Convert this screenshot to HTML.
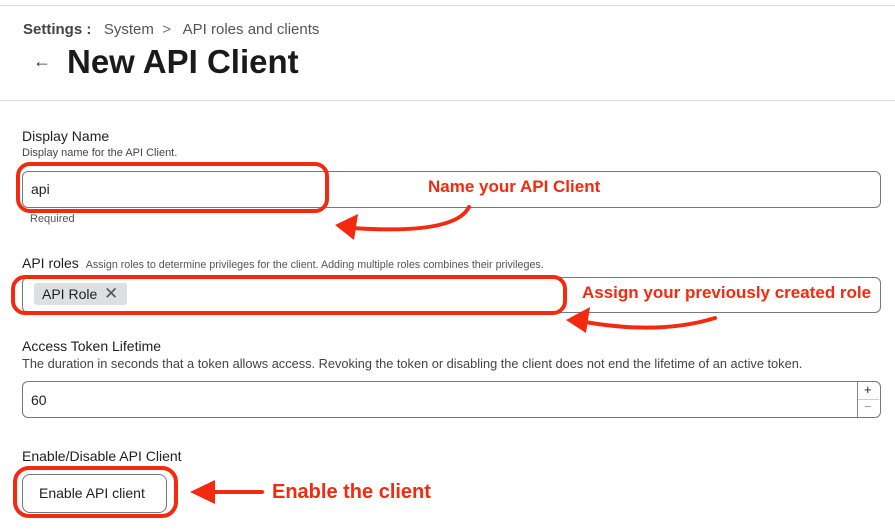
<!DOCTYPE html>
<html><head><style>
body{margin:0;width:895px;height:530px;overflow:hidden;background:#fff;font-family:"Liberation Sans",sans-serif;color:#1f1f1f;position:relative}
.a{position:absolute;white-space:nowrap}
.inp{position:absolute;border:1px solid #777;border-radius:6px;background:#fff}
.red{position:absolute;border:4px solid #f42a10;border-radius:14px}
.ann{position:absolute;color:#f42a10;font-weight:bold;white-space:nowrap}
</style></head><body>
<div class="a" style="left:0;top:5px;width:895px;height:1px;background:#ddd"></div>
<div class="a" style="left:23px;top:21px;font-size:15px;color:#333"><b style="color:#444">Settings :</b>&nbsp;&nbsp; <span style="color:#555">System</span> &nbsp;<span style="color:#777">&gt;</span>&nbsp;&nbsp; <span style="color:#555">API roles and clients</span></div>
<div class="a" style="left:33px;top:51px;font-size:18px;color:#333">←</div>
<div class="a" style="left:67px;top:43px;font-size:33px;font-weight:bold;color:#1a1a1a">New API Client</div>
<div class="a" style="left:0;top:100px;width:895px;height:1px;background:#ddd"></div>

<div class="a" style="left:22px;top:128px;font-size:14px">Display Name</div>
<div class="a" style="left:22px;top:147px;font-size:11px;color:#444">Display name for the API Client.</div>
<div class="inp" style="left:22px;top:171px;width:857px;height:35px"></div>
<div class="a" style="left:31px;top:181px;font-size:14px">api</div>
<div class="a" style="left:30px;top:213px;font-size:11px;color:#555">Required</div>
<div class="red" style="left:16px;top:162px;width:305px;height:43px"></div>
<div class="ann" style="left:428px;top:177px;font-size:17px">Name your API Client</div>

<div class="a" style="left:22px;top:255px;font-size:14px">API roles <span style="font-size:10.7px;color:#555;margin-left:3px">Assign roles to determine privileges for the client. Adding multiple roles combines their privileges.</span></div>
<div class="inp" style="left:22px;top:277px;width:857px;height:34px"></div>
<div class="a" style="left:34px;top:283px;width:93px;height:22px;background:#dde0e3;border-radius:3px"></div>
<div class="a" style="left:42px;top:286px;font-size:14px">API Role</div>
<div class="a" style="left:104px;top:284px;font-size:17px;color:#555">✕</div>
<div class="red" style="left:11px;top:275px;width:548px;height:32px"></div>
<div class="ann" style="left:582px;top:283px;font-size:17px">Assign your previously created role</div>

<div class="a" style="left:22px;top:338px;font-size:14px">Access Token Lifetime</div>
<div class="a" style="left:22px;top:356px;font-size:12.8px;color:#444">The duration in seconds that a token allows access. Revoking the token or disabling the client does not end the lifetime of an active token.</div>
<div class="inp" style="left:22px;top:381px;width:857px;height:35px"></div>
<div class="a" style="left:857px;top:382px;width:1px;height:35px;background:#888"></div>
<div class="a" style="left:858px;top:399px;width:21px;height:1px;background:#ccc"></div>
<div class="a" style="left:864px;top:382px;font-size:13px">+</div>
<div class="a" style="left:864px;top:399px;font-size:13px;color:#999">−</div>
<div class="a" style="left:31px;top:392px;font-size:14px">60</div>

<div class="a" style="left:22px;top:448px;font-size:14px">Enable/Disable API Client</div>
<div class="inp" style="left:22px;top:474px;width:143px;height:37px;border-radius:8px"></div>
<div class="a" style="left:39px;top:485px;font-size:14px">Enable API client</div>
<div class="red" style="left:13px;top:466px;width:157px;height:44px;border-radius:16px"></div>
<div class="ann" style="left:272px;top:481px;font-size:20px">Enable the client</div>

<svg class="a" style="left:0;top:0" width="895" height="530">
<g fill="none" stroke="#f42a10" stroke-width="4" stroke-linecap="round">
<path d="M469 207 Q455 235 352 228"/>
<path d="M715 318 Q660 335 585 322"/>
<path d="M262 492 L215 492"/>
</g>
<g fill="#f42a10">
<polygon points="335,225 358,214 354,240"/>
<polygon points="566,320 590,307 586,333"/>
<polygon points="190,492 215,480 215,504"/>
</g>
</svg>
</body></html>
